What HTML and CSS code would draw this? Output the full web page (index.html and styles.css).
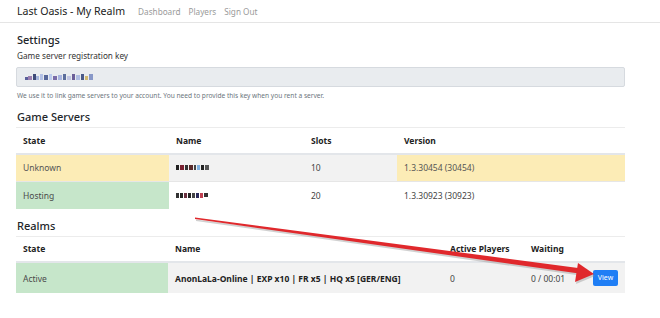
FILE: index.html
```html
<!DOCTYPE html>
<html lang="en">
<head>
  <meta charset="UTF-8">
  <title>Last Oasis - My Realm</title>
  <meta name="viewport" content="width=device-width,initial-scale=1.0">
  <link rel="stylesheet" href="styles.css">
</head>
<body>
<nav class="navbar">
  <span class="brand">Last Oasis - My Realm</span>
  <a class="nav-link" href="#">Dashboard</a>
  <a class="nav-link" href="#">Players</a>
  <a class="nav-link" href="#">Sign Out</a>
</nav>

<div class="container">
  <h4 class="title first">Settings</h4>
  <div class="label">Game server registration key</div>
  <div class="input">
    <svg class="blur" width="72" height="9" viewBox="0 0 72 9">
      <rect x="0" y="4" width="3" height="3" fill="#5a5f9a"/>
      <rect x="3" y="3" width="4" height="4" fill="#9c7fb0"/>
      <rect x="8" y="1" width="3" height="6" fill="#3d4a78"/>
      <rect x="11" y="3" width="3" height="4" fill="#a6b6dc"/>
      <rect x="15" y="1" width="3" height="6" fill="#b3c1e6"/>
      <rect x="19" y="2" width="4" height="5" fill="#56679a"/>
      <rect x="24" y="1" width="3" height="6" fill="#bccbee"/>
      <rect x="28" y="3" width="4" height="4" fill="#7a6ca8"/>
      <rect x="33" y="2" width="4" height="5" fill="#a9b5e0"/>
      <rect x="38" y="1" width="3" height="6" fill="#5b6d9c"/>
      <rect x="42" y="3" width="4" height="4" fill="#c2c6e3"/>
      <rect x="47" y="1" width="3" height="6" fill="#6c5f98"/>
      <rect x="51" y="2" width="4" height="5" fill="#b0bde2"/>
      <rect x="56" y="1" width="3" height="6" fill="#4a5a88"/>
      <rect x="60" y="3" width="3" height="4" fill="#d0b870"/>
      <rect x="64" y="1" width="4" height="6" fill="#8898c8"/>
    </svg>
  </div>
  <div class="help">We use it to link game servers to your account. You need to provide this key when you rent a server.</div>

  <h4 class="title">Game Servers</h4>
  <table class="table servers">
    <thead>
      <tr><th>State</th><th>Name</th><th>Slots</th><th>Version</th></tr>
    </thead>
    <tbody>
      <tr class="striped">
        <td class="warn">Unknown</td>
        <td>
          <svg class="blur" width="40" height="7" viewBox="0 0 40 7">
            <rect x="0" y="1" width="3" height="5" fill="#222"/>
            <rect x="4" y="1" width="4" height="5" fill="#7a2030"/>
            <rect x="9" y="1" width="3" height="5" fill="#333"/>
            <rect x="13" y="1" width="4" height="5" fill="#5a2a2a"/>
            <rect x="18" y="1" width="2" height="5" fill="#444"/>
            <rect x="21" y="1" width="3" height="5" fill="#7fb0e0"/>
            <rect x="25" y="1" width="3" height="5" fill="#222"/>
            <rect x="29" y="1" width="4" height="5" fill="#555"/>
          </svg>
        </td>
        <td>10</td>
        <td class="warn">1.3.30454 (30454)</td>
      </tr>
      <tr>
        <td class="ok">Hosting</td>
        <td>
          <svg class="blur" width="40" height="7" viewBox="0 0 40 7">
            <rect x="0" y="1" width="3" height="5" fill="#333"/>
            <rect x="4" y="1" width="3" height="5" fill="#222"/>
            <rect x="8" y="1" width="3" height="5" fill="#6a3040"/>
            <rect x="12" y="1" width="3" height="5" fill="#222"/>
            <rect x="16" y="1" width="3" height="5" fill="#444"/>
            <rect x="20" y="1" width="3" height="5" fill="#2a2a5a"/>
            <rect x="24" y="1" width="3" height="5" fill="#c04050"/>
            <rect x="28" y="1" width="4" height="4" fill="#333"/>
          </svg>
        </td>
        <td>20</td>
        <td>1.3.30923 (30923)</td>
      </tr>
    </tbody>
  </table>

  <h4 class="title">Realms</h4>
  <table class="table realms">
    <thead>
      <tr><th>State</th><th>Name</th><th>Active Players</th><th>Waiting</th><th></th></tr>
    </thead>
    <tbody>
      <tr class="striped">
        <td class="ok">Active</td>
        <td class="strong">AnonLaLa-Online | EXP x10 | FR x5 | HQ x5 [GER/ENG]</td>
        <td>0</td>
        <td>0 / 00:01</td>
        <td><a class="btn" href="#">View</a></td>
      </tr>
    </tbody>
  </table>
</div>

<!-- annotation drawn over the screenshot -->
<svg class="arrow" width="660" height="318" viewBox="0 0 660 318">
  <g fill="#9a9a9a" opacity="0.45" transform="translate(1,2)">
    <polygon points="195,217.4 580,268.2 579,273.6 195,219"/>
    <polygon points="578,263 594,274 575,282"/>
  </g>
  <polygon points="195,217.4 580,268.2 579,273.6 195,219" fill="#e0282c"/>
  <polygon points="578,263 594,274 575,282" fill="#e0282c"/>
</svg>
</body>
</html>
```

FILE: styles.css
```css
*{
  margin: 0;
  padding: 0;
  box-sizing: border-box;
}
body{
  font-family: "Noto Sans", "Open Sans", sans-serif;
  color: #212529;
  background: #fff;
  position: relative;
  width: 660px;
  height: 318px;
  overflow: hidden;
}
.navbar{
  display: flex;
  align-items: center;
  height: 23px;
  padding-left: 17px;
  border-bottom: 1px solid #e5e5e5;
}
.brand{
  font-size: 10.6px;
  color: #222;
  margin-right: 13px;
}
.nav-link{
  font-size: 8.2px;
  color: #9a9a9a;
  text-decoration: none;
  margin-right: 8px;
}
.container{
  padding: 0 35px 0 16px;
}
.title{
  font-size: 11px;
  font-weight: 500;
  line-height: 15px;
  height: 15px;
  margin: 9px 0 3px 1px;
}
.label{
  font-size: 8.2px;
  line-height: 12px;
  margin: 2px 0 5px 1px;
  color: #333;
}
.input{
  height: 20px;
  background: #e9ecef;
  border: 1px solid #d6dadf;
  border-radius: 2px;
  display: flex;
  align-items: center;
  padding-left: 8px;
}
.blur{
  display: block;
}
.help{
  font-size: 6.6px;
  line-height: 9px;
  color: #6c757d;
  margin: 4px 0 0 1px;
}
.table{
  width: 100%;
  border-collapse: collapse;
  font-size: 8.5px;
  table-layout: fixed;
}
.table th{
  text-align: left;
  font-weight: 700;
  color: #222;
  padding: 0 7px;
  height: 26px;
  border-top: 1px solid #ececec;
  border-bottom: 2px solid #e3e6ea;
}
.table td{
  padding: 0 7px;
  color: #444;
  height: 27px;
}
.servers tbody tr:first-child td{
  height: 28px;
  border-bottom: 1px solid #e6e6e6;
}
.servers th:nth-child(1){ width: 153px; }
.servers th:nth-child(2){ width: 135px; }
.servers th:nth-child(3){ width: 93px; }
.realms th:nth-child(1){ width: 152px; }
.realms th:nth-child(2){ width: 275px; }
.realms th:nth-child(3){ width: 81px; }
.realms th:nth-child(4){ width: 62px; }
.realms td{
  height: 31px;
}
.striped td{
  background: #f2f2f2;
}
.table td.warn{
  background: #fcecb6;
  color: #555;
}
.table td.ok{
  background: #c6e6ca;
  color: #4a4a4a;
}
.table td.strong{
  font-weight: 700;
  color: #222;
}
.btn{
  display: inline-block;
  background: #1f7ef5;
  color: #fff;
  font-size: 7px;
  text-decoration: none;
  width: 25px;
  height: 16px;
  line-height: 16px;
  text-align: center;
  border-radius: 2px;
}
.arrow{
  position: absolute;
  left: 0;
  top: 0;
  pointer-events: none;
}
```
